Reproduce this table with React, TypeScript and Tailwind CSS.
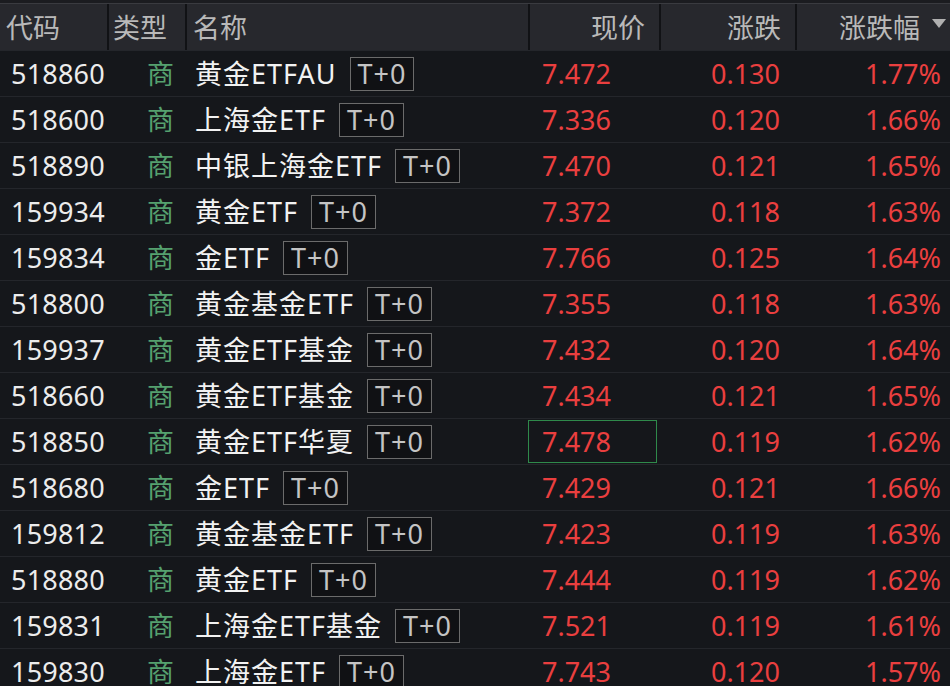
import { } from 'react';

type Row = { code: string; name: string; price: string; chg: string; pct: string };

const rows: Row[] = [
  { code: '518860', name: '黄金ETFAU', price: '7.472', chg: '0.130', pct: '1.77%' },
  { code: '518600', name: '上海金ETF', price: '7.336', chg: '0.120', pct: '1.66%' },
  { code: '518890', name: '中银上海金ETF', price: '7.470', chg: '0.121', pct: '1.65%' },
  { code: '159934', name: '黄金ETF', price: '7.372', chg: '0.118', pct: '1.63%' },
  { code: '159834', name: '金ETF', price: '7.766', chg: '0.125', pct: '1.64%' },
  { code: '518800', name: '黄金基金ETF', price: '7.355', chg: '0.118', pct: '1.63%' },
  { code: '159937', name: '黄金ETF基金', price: '7.432', chg: '0.120', pct: '1.64%' },
  { code: '518660', name: '黄金ETF基金', price: '7.434', chg: '0.121', pct: '1.65%' },
  { code: '518850', name: '黄金ETF华夏', price: '7.478', chg: '0.119', pct: '1.62%' },
  { code: '518680', name: '金ETF', price: '7.429', chg: '0.121', pct: '1.66%' },
  { code: '159812', name: '黄金基金ETF', price: '7.423', chg: '0.119', pct: '1.63%' },
  { code: '518880', name: '黄金ETF', price: '7.444', chg: '0.119', pct: '1.62%' },
  { code: '159831', name: '上海金ETF基金', price: '7.521', chg: '0.119', pct: '1.61%' },
  { code: '159830', name: '上海金ETF', price: '7.743', chg: '0.120', pct: '1.57%' },
];

const cols = 'grid grid-cols-[107px_78px_343px_131px_136px_155px]';

const App = () => {
  return (
    <div
      className="w-[950px] h-[686px] overflow-hidden bg-[#15171b] text-[27px] leading-none"
      style={{ fontFamily: '"Noto Sans", "Noto Sans CJK SC", sans-serif' }}
    >
      <div className="h-[4px] bg-[#1b1c20] border-b border-[#3a3b40]" />
      <div className={`${cols} h-[46px] bg-[#27282d] text-[#b9b9b9]`}>
        <div className="flex items-center pl-[6px]">代码</div>
        <div className="flex items-center pl-[4px] border-l-2 border-[#111215]">类型</div>
        <div className="flex items-center pl-[6px] border-l-2 border-[#111215]">名称</div>
        <div className="flex items-center justify-end pr-[14px] border-l-2 border-[#111215]">现价</div>
        <div className="flex items-center justify-end pr-[14px] border-l-2 border-[#111215]">涨跌</div>
        <div className="flex items-center justify-end pr-[4px] border-l-2 border-[#111215]">
          <span>涨跌幅</span>
          <svg width="14" height="10" viewBox="0 0 14 10" className="ml-[12px] mb-[6px]">
            <path d="M0 0 L14 0 L7 9 Z" fill="#b0b0b0" />
          </svg>
        </div>
      </div>
      {rows.map((r, i) => (
        <div key={r.code + i} className={`${cols} h-[46px] border-t border-[#24262b]`}>
          <div className="flex items-center pl-[11px] text-[#ececec] tracking-[0.2px]">{r.code}</div>
          <div className="flex items-center pl-[40px]">
            <span className="text-[#55a16f]">商</span>
          </div>
          <div className="flex items-center pl-[10px] text-[#f2f2f2]">
            <span className="tracking-[1px]">{r.name}</span>
            <span className="ml-[13px] h-[34px] px-[7px] flex items-center border border-[#6b6b6b] text-[#c4c4c4] bg-[#101114] tracking-[1px]">
              T+0
            </span>
          </div>
          <div className="flex items-center py-[1px] pr-[2px]">
            <div
              className={`flex items-center h-full w-full pl-[13px] text-[#ea3f3f] border ${
                i === 8 ? 'border-[#2f8a4b]' : 'border-transparent'
              }`}
            >
              {r.price}
            </div>
          </div>
          <div className="flex items-center justify-end pr-[15px] text-[#ea3f3f]">{r.chg}</div>
          <div className="flex items-center justify-end pr-[9px] text-[#ea3f3f]">{r.pct}</div>
        </div>
      ))}
    </div>
  );
};

export default App;
